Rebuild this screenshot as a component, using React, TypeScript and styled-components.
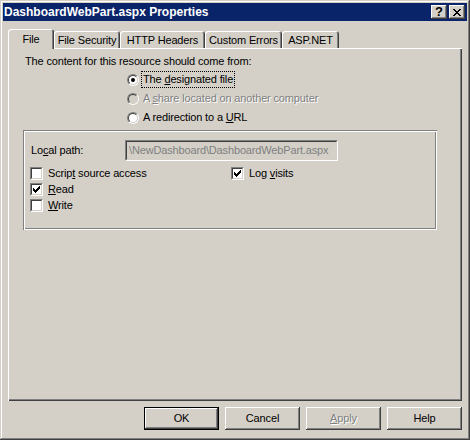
import React from "react";
import styled, { createGlobalStyle, css } from "styled-components";

const Global = createGlobalStyle`
  html, body { margin: 0; padding: 0; background: #D4D0C8; }
  body {
    font-family: "Liberation Sans", Arial, sans-serif;
    font-size: 11px;
    letter-spacing: -0.15px;
    color: #000;
  }
  * { box-sizing: border-box; }
`;

const Window = styled.div`
  width: 470px;
  height: 440px;
  padding: 3px;
  background: #D4D0C8;
  box-shadow: inset -1px -1px #404040, inset 1px 1px #D4D0C8,
    inset -2px -2px #808080, inset 2px 2px #fff;
  display: flex;
  flex-direction: column;
`;

const TitleBar = styled.div`
  height: 18px;
  background: #0A246A;
  display: flex;
  align-items: center;
  padding: 0 2px 0 1px;
`;

const TitleText = styled.div`
  flex: 1;
  color: #fff;
  font-weight: bold;
  font-size: 12px;
  letter-spacing: 0;
  line-height: 14px;
  white-space: nowrap;
`;

const CapButton = styled.div`
  width: 16px;
  height: 14px;
  background: #D4D0C8;
  box-shadow: inset -1px -1px #404040, inset 1px 1px #fff,
    inset -2px -2px #808080;
  display: flex;
  align-items: center;
  justify-content: center;
  font-weight: bold;
  font-size: 13px;
  letter-spacing: 0;
  line-height: 14px;
  color: #000;
  & + & { margin-left: 2px; }
`;

const Body = styled.div`
  flex: 1;
  display: flex;
  flex-direction: column;
  padding: 8px 5px 7px 5px;
`;

const TabRow = styled.div`
  height: 19px;
  display: flex;
  align-items: flex-end;
  padding-left: 2px;
  position: relative;
  z-index: 1;
`;

const Tab = styled.div<{ $w: number; $active?: boolean }>`
  width: ${(p) => p.$w}px;
  height: 17px;
  padding-top: 3px;
  line-height: 13px;
  text-align: center;
  white-space: nowrap;
  background: #D4D0C8;
  border-radius: 3px 3px 0 0;
  box-shadow: inset 1px 1px #fff, inset -1px 0 #404040, inset -2px 0 #808080;
  ${(p) =>
    p.$active &&
    css`
      width: ${p.$w + 2}px;
      height: 20px;
      margin-left: -2px;
      margin-bottom: -1px;
      padding-top: 4px;
    `}
`;

const Panel = styled.div`
  flex: 1;
  background: #D4D0C8;
  box-shadow: inset 1px 1px #fff, inset -1px -1px #404040,
    inset -2px -2px #808080;
  padding: 7px 0 0 15px;
  display: flex;
  flex-direction: column;
  align-items: flex-start;
`;

const Heading = styled.div`
  margin-left: 2px;
  line-height: 13px;
  height: 13px;
  white-space: nowrap;
`;

const RadioGroup = styled.div`
  margin: 2px 0 0 104px;
  display: flex;
  flex-direction: column;
`;

const OptionRow = styled.div`
  height: 19px;
  display: flex;
  align-items: center;
  gap: 3px;
`;

const RadioOuter = styled.div`
  width: 12px;
  height: 12px;
  border-radius: 50%;
  border: 1px solid;
  border-color: #808080 #fff #fff #808080;
`;

const RadioInner = styled.div<{ $disabled?: boolean }>`
  width: 10px;
  height: 10px;
  border-radius: 50%;
  border: 1px solid;
  border-color: #404040 #D4D0C8 #D4D0C8 #404040;
  background: ${(p) => (p.$disabled ? "#D4D0C8" : "#fff")};
  display: flex;
  align-items: center;
  justify-content: center;
`;

const RadioDot = styled.div`
  width: 4px;
  height: 4px;
  border-radius: 50%;
  background: #000;
`;

const Label = styled.span<{ $disabled?: boolean; $focus?: boolean }>`
  line-height: 13px;
  padding: 1px 1px;
  white-space: nowrap;
  ${(p) =>
    p.$disabled &&
    css`
      color: #808080;
      text-shadow: 1px 1px #fff;
    `}
  ${(p) =>
    p.$focus &&
    css`
      outline: 1px dotted #000;
      outline-offset: 0;
    `}
`;

const Mn = styled.span`
  text-decoration: underline;
  text-underline-offset: 1px;
`;

const GroupBox = styled.div`
  margin-top: 3px;
  width: 414px;
  height: 100px;
  padding: 10px 0 0 7px;
  box-shadow: inset 1px 1px #808080, inset -1px -1px #fff,
    inset 2px 2px #fff, inset -2px -2px #808080;
`;

const PathRow = styled.div`
  display: flex;
  align-items: center;
  height: 21px;
`;

const PathLabel = styled.div`
  width: 95px;
  padding-left: 1px;
  line-height: 13px;
`;

const PathField = styled.div`
  width: 213px;
  height: 21px;
  border: 1px solid;
  border-color: #808080 #fff #fff #808080;
  background: #D4D0C8;
`;

const PathFieldInner = styled.div`
  height: 19px;
  border: 1px solid;
  border-color: #404040 #D4D0C8 #D4D0C8 #404040;
  color: #808080;
  padding-left: 2px;
  line-height: 17px;
  white-space: nowrap;
  overflow: hidden;
`;

const CheckGrid = styled.div`
  margin-top: 4px;
  display: grid;
  grid-template-columns: 201px auto;
  grid-auto-rows: 16px;
`;

const CheckRow = styled.div`
  display: flex;
  align-items: center;
  gap: 4px;
`;

const CheckOuter = styled.div`
  width: 13px;
  height: 13px;
  border: 1px solid;
  border-color: #808080 #fff #fff #808080;
`;

const CheckInner = styled.div`
  width: 11px;
  height: 11px;
  border: 1px solid;
  border-color: #404040 #D4D0C8 #D4D0C8 #404040;
  background: #fff;
  display: flex;
  align-items: center;
  justify-content: center;
`;

const ButtonRow = styled.div`
  margin-top: 6px;
  display: flex;
  justify-content: flex-end;
  gap: 6px;
`;

const Button = styled.div<{ $default?: boolean; $disabled?: boolean }>`
  width: 75px;
  height: 23px;
  display: flex;
  align-items: center;
  justify-content: center;
  background: #D4D0C8;
  line-height: 13px;
  box-shadow: inset -1px -1px #404040, inset 1px 1px #fff,
    inset -2px -2px #808080;
  ${(p) =>
    p.$default &&
    css`
      box-shadow: inset 0 0 0 1px #000, inset -2px -2px #404040,
        inset 2px 2px #fff, inset -3px -3px #808080;
    `}
  ${(p) =>
    p.$disabled &&
    css`
      color: #808080;
      text-shadow: 1px 1px #fff;
    `}
`;

const CheckMark = () => (
  <svg width="7" height="7" viewBox="0 0 7 7" shapeRendering="crispEdges">
    <path
      fill="#000"
      d="M6 0h1v1h-1z M5 1h2v1h-2z M0 2h1v1h-1z M4 2h3v1h-3z M0 3h2v1h-2z M3 3h3v1h-3z M0 4h5v1h-5z M1 5h3v1h-3z M2 6h1v1h-1z"
    />
  </svg>
);

const CloseGlyph = () => (
  <svg width="8" height="7" viewBox="0 0 8 7" shapeRendering="crispEdges">
    <path
      fill="#000"
      d="M0 0h2v1h-2z M6 0h2v1h-2z M1 1h2v1h-2z M5 1h2v1h-2z M2 2h4v1h-4z M3 3h2v1h-2z M2 4h4v1h-4z M1 5h2v1h-2z M5 5h2v1h-2z M0 6h2v1h-2z M6 6h2v1h-2z"
    />
  </svg>
);

const Radio = ({ checked, disabled }: { checked?: boolean; disabled?: boolean }) => (
  <RadioOuter>
    <RadioInner $disabled={disabled}>{checked && <RadioDot />}</RadioInner>
  </RadioOuter>
);

const Check = ({ checked }: { checked?: boolean }) => (
  <CheckOuter>
    <CheckInner>{checked && <CheckMark />}</CheckInner>
  </CheckOuter>
);

const tabs = [
  { label: "File", w: 44 },
  { label: "File Security", w: 66 },
  { label: "HTTP Headers", w: 85 },
  { label: "Custom Errors", w: 77 },
  { label: "ASP.NET", w: 57 },
];

export default function App() {
  return (
    <>
      <Global />
      <Window>
        <TitleBar>
          <TitleText>DashboardWebPart.aspx Properties</TitleText>
          <CapButton>?</CapButton>
          <CapButton>
            <CloseGlyph />
          </CapButton>
        </TitleBar>
        <Body>
          <TabRow>
            {tabs.map((t, i) => (
              <Tab key={t.label} $w={t.w} $active={i === 0}>
                {t.label}
              </Tab>
            ))}
          </TabRow>
          <Panel>
            <Heading>The content for this resource should come from:</Heading>
            <RadioGroup>
              <OptionRow>
                <Radio checked />
                <Label $focus>
                  The <Mn>d</Mn>esignated file
                </Label>
              </OptionRow>
              <OptionRow>
                <Radio disabled />
                <Label $disabled>
                  A <Mn>s</Mn>hare located on another computer
                </Label>
              </OptionRow>
              <OptionRow>
                <Radio />
                <Label>
                  A redirection to a <Mn>U</Mn>RL
                </Label>
              </OptionRow>
            </RadioGroup>
            <GroupBox>
              <PathRow>
                <PathLabel>
                  Lo<Mn>c</Mn>al path:
                </PathLabel>
                <PathField>
                  <PathFieldInner>\NewDashboard\DashboardWebPart.aspx</PathFieldInner>
                </PathField>
              </PathRow>
              <CheckGrid>
                <CheckRow>
                  <Check />
                  <Label>
                    Scrip<Mn>t</Mn> source access
                  </Label>
                </CheckRow>
                <CheckRow>
                  <Check checked />
                  <Label>
                    Log <Mn>v</Mn>isits
                  </Label>
                </CheckRow>
                <CheckRow>
                  <Check checked />
                  <Label>
                    <Mn>R</Mn>ead
                  </Label>
                </CheckRow>
                <div />
                <CheckRow>
                  <Check />
                  <Label>
                    <Mn>W</Mn>rite
                  </Label>
                </CheckRow>
              </CheckGrid>
            </GroupBox>
          </Panel>
          <ButtonRow>
            <Button $default>OK</Button>
            <Button>Cancel</Button>
            <Button $disabled>
              <span>
                <Mn>A</Mn>pply
              </span>
            </Button>
            <Button>Help</Button>
          </ButtonRow>
        </Body>
      </Window>
    </>
  );
}
